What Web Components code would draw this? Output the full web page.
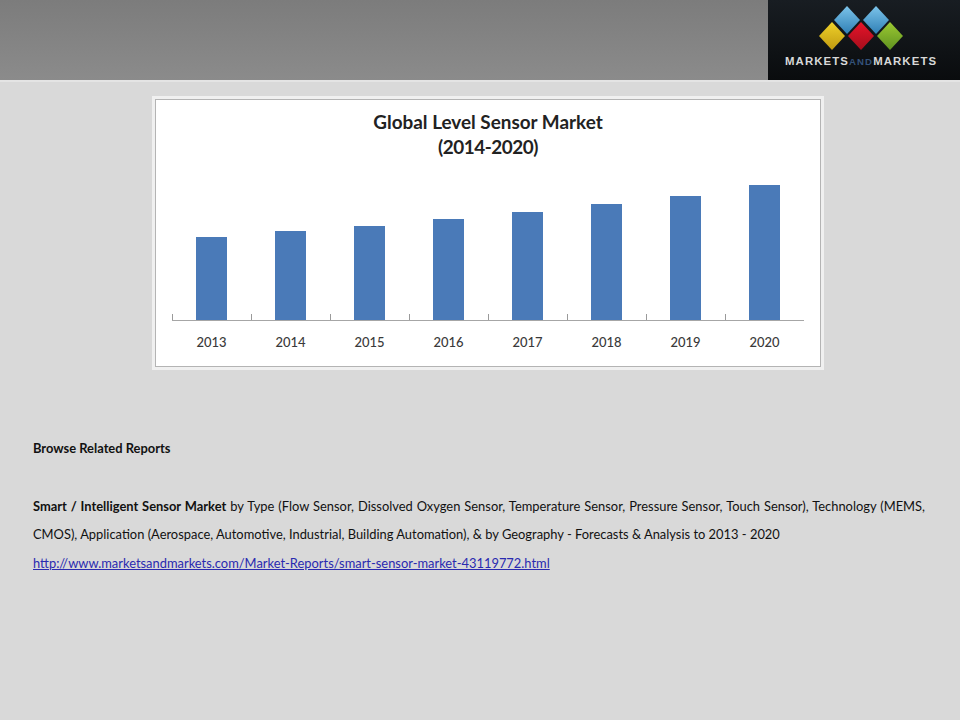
<!DOCTYPE html>
<html>
<head>
<meta charset="utf-8">
<title>Global Level Sensor Market</title>
<style>
  html, body { margin: 0; padding: 0; background: #d9d9d9; }
  body { width: 960px; height: 720px; overflow: hidden; font-family: Lato, "Open Sans", sans-serif; }
</style>
</head>
<body>
<slide-page>
  <slide-header></slide-header>
  <bar-chart heading="Global Level Sensor Market" period="(2014-2020)"
    data="2013:83,2014:88.5,2015:94,2016:100.5,2017:108,2018:116,2019:124,2020:134.5"></bar-chart>
  <related-reports>
    <b>Browse Related Reports</b>
    <report-item href="http://www.marketsandmarkets.com/Market-Reports/smart-sensor-market-43119772.html">
      <b>Smart / Intelligent Sensor Market</b> by Type (Flow Sensor, Dissolved Oxygen Sensor, Temperature Sensor, Pressure Sensor, Touch Sensor), Technology (MEMS, CMOS), Application (Aerospace, Automotive, Industrial, Building Automation), &amp; by Geography - Forecasts &amp; Analysis to 2013 - 2020
    </report-item>
  </related-reports>
</slide-page>

<script>
class SlidePage extends HTMLElement {
    constructor() {
        super();
        this.attachShadow({mode: 'open'});
        this.shadowRoot.innerHTML = `
            <style>
                :host {
                    display: flex;
                    flex-direction: column;
                    width: 960px;
                    height: 720px;
                    background: #d9d9d9;
                }
            </style>
            <slot></slot>
        `;
    }
}

class SlideHeader extends HTMLElement {
    constructor() {
        super();
        this.attachShadow({mode: 'open'});
        this.shadowRoot.innerHTML = `
            <style>
                :host {
                    display: flex;
                    justify-content: flex-end;
                    height: 80px;
                    background: linear-gradient(#7c7c7c, #8b8b8b);
                    box-shadow: 0 2px 0 #e4e4e4;
                }
                .logo {
                    width: 192px;
                    display: flex;
                    flex-direction: column;
                    background: linear-gradient(#181d22, #0a0c0e);
                }
                svg { display: block; margin: 4px 0 0 47.7px; }
                .name {
                    margin: 1px 0 0 17px;
                    font: 700 11.4px/14px "Liberation Sans", sans-serif;
                    letter-spacing: 1.1px;
                    color: #d8d8d8;
                    white-space: nowrap;
                }
                .name span { color: #34527a; font-size: 9.6px; }
            </style>
            <div class="logo">
                <svg width="90" height="49" viewBox="0 0 90 49">
                    <defs>
                        <linearGradient id="b" x1="0" y1="0" x2="0" y2="1"><stop offset="0" stop-color="#7cc4ea"/><stop offset="1" stop-color="#2f7fb5"/></linearGradient>
                        <linearGradient id="y" x1="0" y1="0" x2="0" y2="1"><stop offset="0" stop-color="#efd12a"/><stop offset="1" stop-color="#c09a10"/></linearGradient>
                        <linearGradient id="r" x1="0" y1="0" x2="0" y2="1"><stop offset="0" stop-color="#e8142a"/><stop offset="1" stop-color="#a50e1c"/></linearGradient>
                        <linearGradient id="g" x1="0" y1="0" x2="0" y2="1"><stop offset="0" stop-color="#9cc932"/><stop offset="1" stop-color="#5f9220"/></linearGradient>
                    </defs>
                    <polygon points="31,2 44,16 31,30 18,16" fill="url(#b)"/>
                    <polygon points="60,2 73,16 60,30 47,16" fill="url(#b)"/>
                    <polygon points="16,18 29,32 16,46 3,32" fill="url(#y)"/>
                    <polygon points="45,18 58,32 45,46 32,32" fill="url(#r)"/>
                    <polygon points="74,18 87,32 74,46 61,32" fill="url(#g)"/>
                </svg>
                <div class="name">MARKETS<span>AND</span>MARKETS</div>
            </div>
        `;
    }
}

class BarChart extends HTMLElement {
    constructor() {
        super();
        this.attachShadow({mode: 'open'});
        this.shadowRoot.innerHTML = `
            <style>
                :host {
                    display: block;
                    box-sizing: border-box;
                    width: 672px;
                    height: 274px;
                    margin: 16px 0 0 152px;
                    background: #fff;
                    border: 3px solid #f0f0f0;
                    outline: 1px solid #b4b4b4;
                    outline-offset: -4px;
                    color: #262626;
                }
                h2 {
                    margin: 0;
                    padding-top: 11px;
                    text-align: center;
                    font: 700 18.9px/24.5px Lato, sans-serif;
                    color: #222;
                }
                #period { letter-spacing: -0.45px; }
                .plot {
                    display: grid;
                    grid-template-columns: repeat(8, 79px);
                    align-items: end;
                    width: 632px;
                    height: 135px;
                    margin: 25.5px 0 0 17px;
                    border-bottom: 1px solid #a6a6a6;
                    background: repeating-linear-gradient(90deg, #9a9a9a 0 1px, transparent 1px 79px) 0 100% / 633px 6px no-repeat;
                }
                .bar {
                    justify-self: center;
                    width: 31.5px;
                    background: #4a7ab8;
                }
                .years {
                    display: grid;
                    grid-template-columns: repeat(8, 79px);
                    margin: 13px 0 0 17px;
                    text-align: center;
                    font: 500 13px/16px Lato, sans-serif;
                    color: #3a3a3a;
                }
            </style>
            <h2><span id="heading"></span><br><span id="period"></span></h2>
            <div class="plot" id="plot"></div>
            <div class="years" id="years"></div>
        `;
    }
    connectedCallback() {
        this.shadowRoot.getElementById("heading").textContent = this.getAttribute('heading');
        this.shadowRoot.getElementById("period").textContent = this.getAttribute('period');
        for (const pair of this.getAttribute('data').split(',')) {
            const [year, value] = pair.split(':');
            const bar = document.createElement('div');
            bar.className = 'bar';
            bar.style.height = value + 'px';
            this.shadowRoot.getElementById("plot").appendChild(bar);
            const label = document.createElement('div');
            label.textContent = year;
            this.shadowRoot.getElementById("years").appendChild(label);
        }
    }
}

class RelatedReports extends HTMLElement {
    constructor() {
        super();
        this.attachShadow({mode: 'open'});
        this.shadowRoot.innerHTML = `
            <style>
                :host {
                    display: block;
                    margin: 64px 35px 0 33px;
                    font: 400 12.9px/28.7px Lato, sans-serif;
                    color: #111;
                }
                ::slotted(b) { display: block; margin-bottom: 29px; font-weight: 700; }
            </style>
            <slot></slot>
        `;
    }
}

class ReportItem extends HTMLElement {
    constructor() {
        super();
        this.attachShadow({mode: 'open'});
        this.shadowRoot.innerHTML = `
            <style>
                :host { display: block; }
                .text { text-align: justify; }
                a { display: block; color: #2a2ab0; text-decoration: underline; }
            </style>
            <div class="text"><slot></slot></div>
            <a id="link"></a>
        `;
    }
    connectedCallback() {
        const link = this.shadowRoot.getElementById("link");
        link.href = this.getAttribute('href');
        link.textContent = this.getAttribute('href');
    }
}

customElements.define("slide-page", SlidePage);
customElements.define("slide-header", SlideHeader);
customElements.define("bar-chart", BarChart);
customElements.define("related-reports", RelatedReports);
customElements.define("report-item", ReportItem);
</script>
</body>
</html>
